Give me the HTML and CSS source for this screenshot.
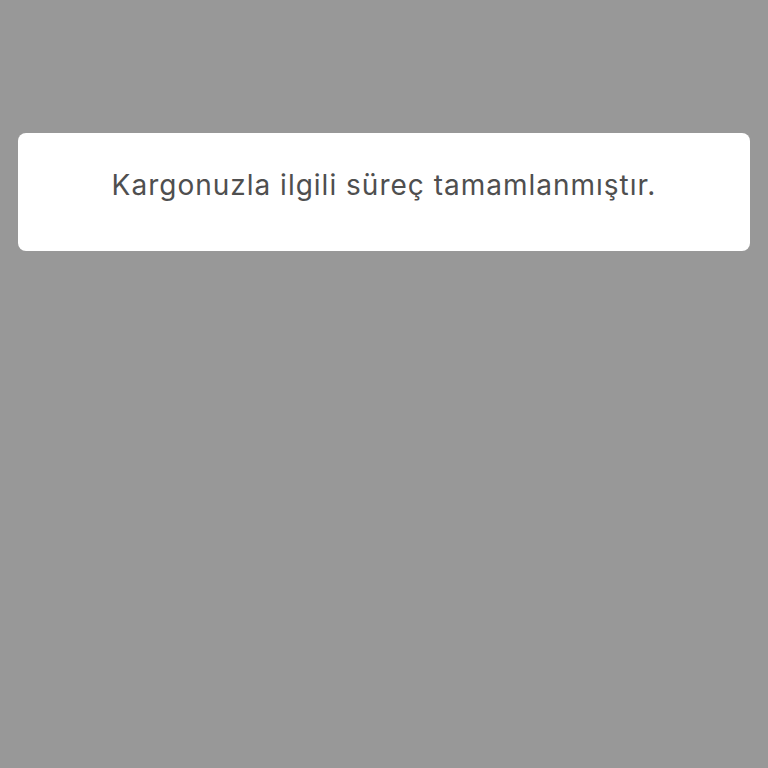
FILE: index.html
```html
<!DOCTYPE html>
<html lang="tr">
<head>
    <meta charset="UTF-8">
    <meta name="viewport" content="width=device-width, initial-scale=1.0">
    <title>Kargo</title>
    <link rel="stylesheet" href="styles.css">
</head>
<body>
    <div class="notice">
        Kargonuzla ilgili süreç tamamlanmıştır.
    </div>
</body>
</html>
```

FILE: styles.css
```css
html {
    background: #989898;
}
body {
    margin: 0;
    padding: 133px 18px 0;
    font-family: Inter, "Noto Sans", sans-serif;
}
.notice {
    background: #fff;
    border-radius: 8px;
    height: 118px;
    display: flex;
    align-items: center;
    justify-content: center;
    color: #4f4f4f;
    font-size: 28px;
    letter-spacing: 1px;
    padding-bottom: 14px;
    box-sizing: border-box;
}
```
